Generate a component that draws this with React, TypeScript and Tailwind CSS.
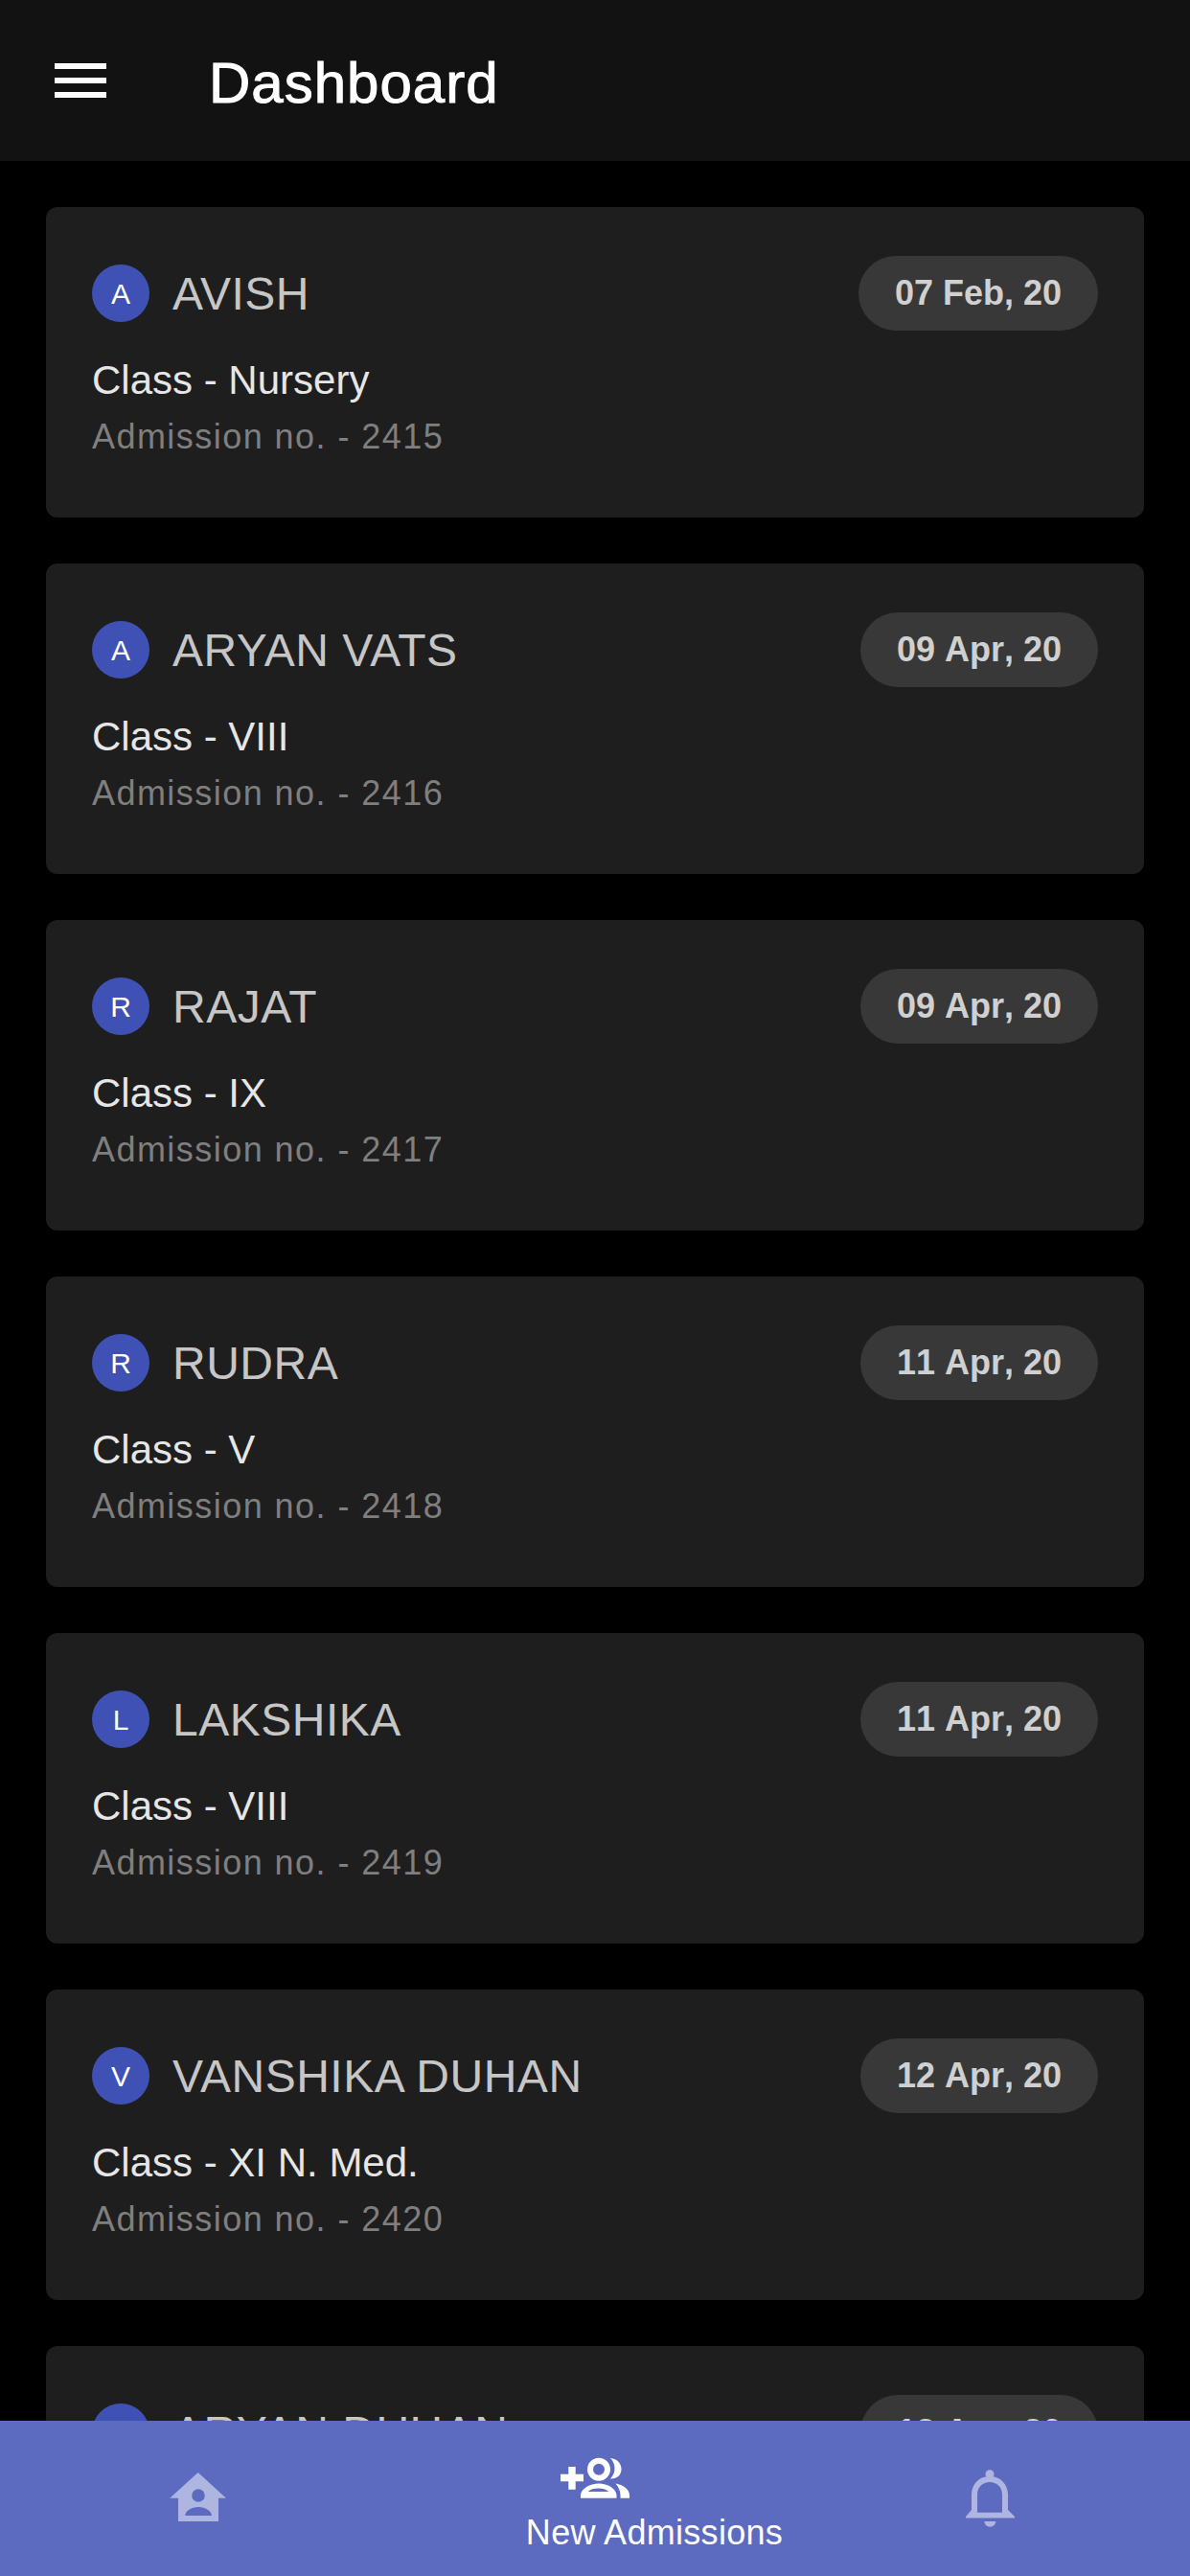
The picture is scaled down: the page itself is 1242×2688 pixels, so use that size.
const admissions = [
	{ name: "AVISH", date: "07 Feb, 20", cls: "Nursery", no: 2415 },
	{ name: "ARYAN VATS", date: "09 Apr, 20", cls: "VIII", no: 2416 },
	{ name: "RAJAT", date: "09 Apr, 20", cls: "IX", no: 2417 },
	{ name: "RUDRA", date: "11 Apr, 20", cls: "V", no: 2418 },
	{ name: "LAKSHIKA", date: "11 Apr, 20", cls: "VIII", no: 2419 },
	{ name: "VANSHIKA DUHAN", date: "12 Apr, 20", cls: "XI N. Med.", no: 2420 },
	{ name: "ARYAN DUHAN", date: "13 Apr, 20", cls: "XI", no: 2421 },
];

function HomeIcon() {
	return (
		<svg width="100" height="70" viewBox="-3 0 100 70" fill="#aeb5e0">
			<path
				fillRule="evenodd"
				d="M46.7 10 L76 36.7 H68 V61 H26 V36.7 H17.3 Z M47 27.2 A6.8 6.8 0 1 0 47 40.8 A6.8 6.8 0 1 0 47 27.2 Z M33.3 55 H61 C61 50 54 46 47 46 C40 46 33.3 50 33.3 55 Z"
			/>
		</svg>
	);
}

function PeopleAddIcon() {
	return (
		<svg width="120" height="70" viewBox="1 0 120 70" fill="#fff">
			<path d="M33.3 24 H40.7 V31.7 H49 V39.3 H40.7 V47.7 H33.3 V39.3 H25 V31.7 H33.3 Z" />
			<path
				fillRule="evenodd"
				d="M65 14.7 A12 12 0 1 0 65 38.7 A12 12 0 1 0 65 14.7 Z M65 20.7 A6 6 0 1 1 65 32.7 A6 6 0 1 1 65 20.7 Z"
			/>
			<path d="M77 15 C84 15.5 88.5 20.5 88.5 26.5 C88.5 32.5 84 37 77 36.5 C80 33 81.5 30 81.5 26 C81.5 21.5 80 18 77 15 Z" />
			<path
				fillRule="evenodd"
				d="M46 56.7 V53.7 C46 47 56 41.5 65 41.5 C74 41.5 83.5 47 83.5 53.7 V56.7 Z M53.5 50 H75.5 C72.5 47.5 69 46.5 64.5 46.5 C60 46.5 56 47.5 53.5 50 Z"
			/>
			<path d="M82.5 41.5 C91 43 97 48 97 53.5 V56.7 H87.5 V53.5 C87.5 49 85.5 45 82.5 41.5 Z" />
		</svg>
	);
}

function BellIcon() {
	return (
		<svg width="90" height="75" viewBox="0 0 90 75" fill="#aeb5e0">
			<circle cx="43" cy="11.7" r="4.5" />
			<path
				fillRule="evenodd"
				d="M24 49 V33 C24 22 32 14 43 14 C54 14 62 22 62 33 V49 L69 56 V57.5 H18 V56 Z M30 51.7 H56 V33 C56 25 50 20 43 20 C36 20 30 25 30 33 Z"
			/>
			<path d="M37.3 61 H49.3 C49 64.5 46.5 66.7 43.3 66.7 C40 66.7 37.6 64.5 37.3 61 Z" />
		</svg>
	);
}

export default function App() {
	return (
		<div className="flex flex-col h-[2688px] w-[1242px] overflow-hidden bg-black font-['Liberation_Sans',sans-serif]">
			{/* header */}
			<div className="h-[168px] shrink-0 bg-[#121212] flex items-center pl-[57px]">
				<div className="flex flex-col gap-[9px] w-[54px]">
					<div className="h-[6px] bg-white" />
					<div className="h-[6px] bg-white" />
					<div className="h-[6px] bg-white" />
				</div>
				<h1 className="ml-[107px] mt-[6px] text-[60px] leading-[68px] tracking-[1px] text-white [font-kerning:none] [-webkit-text-stroke:1px_#fff]">
					Dashboard
				</h1>
			</div>

			{/* list */}
			<div className="flex-1 min-h-0 overflow-hidden flex flex-col gap-[48px] pt-[48px] px-[48px]">
				{admissions.map((a) => (
					<div
						key={a.no}
						className="h-[324px] shrink-0 rounded-[12px] bg-[#1e1e1e] pt-[51px] px-[48px]"
					>
						<div className="flex items-center justify-between h-[78px]">
							<div className="flex items-center">
								<div className="w-[60px] h-[60px] rounded-full bg-[#3f51b5] flex items-center justify-center text-[30px] text-white">
									{a.name[0]}
								</div>
								<span className="ml-[24px] mt-[2px] text-[48px] leading-[56px] tracking-[0.5px] text-[#c6c6c6]">
									{a.name}
								</span>
							</div>
							<div className="h-[78px] rounded-full bg-[#383838] px-[38px] flex items-center text-[36px] font-bold text-[#d0d0d0] [font-kerning:none]">
								{a.date}
							</div>
						</div>
						<p className="mt-[27px] text-[42px] leading-[50px] text-[#e6e6e6]">
							Class - {a.cls}
						</p>
						<p className="mt-[13px] text-[36px] leading-[42px] tracking-[1.45px] text-[#7f7f7f] [font-kerning:none]">
							Admission no. - {a.no}
						</p>
					</div>
				))}
			</div>

			{/* bottom nav */}
			<div className="h-[162px] shrink-0 bg-[#5c6bc0] grid grid-cols-3 relative">
				<div className="flex flex-col items-center pt-[44px]">
					<HomeIcon />
				</div>
				<div className="flex flex-col items-center pt-[24px]">
					<PeopleAddIcon />
					<span className="ml-[124px] mt-[2px] text-[36px] leading-[42px] tracking-[0.3px] whitespace-nowrap text-white">
						New Admissions
					</span>
				</div>
				<div className="flex flex-col items-center pt-[44px]">
					<BellIcon />
				</div>
			</div>
		</div>
	);
}
